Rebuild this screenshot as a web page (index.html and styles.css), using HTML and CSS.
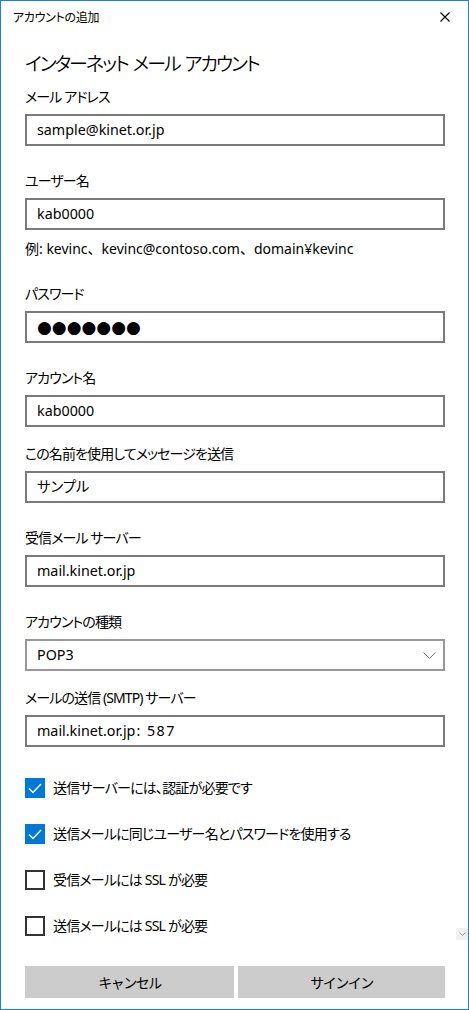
FILE: index.html
```html
<!DOCTYPE html>
<html lang="ja">
<head>
    <meta charset="UTF-8">
    <meta name="viewport" content="width=device-width, initial-scale=1.0">
    <title>アカウントの追加</title>
    <link rel="stylesheet" href="styles.css">
</head>
<body>
    <div class="window">
        <!-- Title bar -->
        <div class="titlebar">
            <span class="title">アカウントの追加</span>
            <svg class="close" width="10" height="10" viewBox="0 0 10 10">
                <path d="M0.5 0.5 L9.5 9.5 M9.5 0.5 L0.5 9.5" stroke="#000" stroke-width="1.1" fill="none"/>
            </svg>
        </div>

        <!-- Form -->
        <div class="content">
            <h1>インターネット メール アカウント</h1>

            <div class="field">
                <label>メール アドレス</label>
                <div class="input">sample@kinet.or.jp</div>
            </div>

            <div class="field">
                <label>ユーザー名</label>
                <div class="input">kab0000</div>
                <p class="hint">例: kevinc、kevinc@contoso.com、domain¥kevinc</p>
            </div>

            <div class="field">
                <label>パスワード</label>
                <div class="input password">●●●●●●●</div>
            </div>

            <div class="field">
                <label>アカウント名</label>
                <div class="input">kab0000</div>
            </div>

            <div class="field tight">
                <label>この名前を使用してメッセージを送信</label>
                <div class="input">サンプル</div>
            </div>

            <div class="field">
                <label>受信メール サーバー</label>
                <div class="input">mail.kinet.or.jp</div>
            </div>

            <div class="field">
                <label>アカウントの種類</label>
                <div class="input select">
                    <span>POP3</span>
                    <svg width="13" height="7" viewBox="0 0 13 7">
                        <path d="M0.5 0.5 L6.5 6.5 L12.5 0.5" stroke="#7a7a7a" stroke-width="1" fill="none"/>
                    </svg>
                </div>
            </div>

            <div class="field tight">
                <label>メールの送信 (SMTP) サーバー</label>
                <div class="input">mail.kinet.or.jp<span class="port">: 587</span></div>
            </div>

            <div class="checks">
                <div class="check">
                    <span class="box checked">
                        <svg width="14" height="11" viewBox="0 0 14 11">
                            <path d="M1 5.5 L5 9.5 L13 1" stroke="#fff" stroke-width="1.4" fill="none"/>
                        </svg>
                    </span>
                    送信サーバーには、認証が必要です
                </div>
                <div class="check">
                    <span class="box checked">
                        <svg width="14" height="11" viewBox="0 0 14 11">
                            <path d="M1 5.5 L5 9.5 L13 1" stroke="#fff" stroke-width="1.4" fill="none"/>
                        </svg>
                    </span>
                    送信メールに同じユーザー名とパスワードを使用する
                </div>
                <div class="check">
                    <span class="box"></span>
                    受信メールには SSL が必要
                </div>
                <div class="check">
                    <span class="box"></span>
                    送信メールには SSL が必要
                </div>
            </div>

            <div class="buttons">
                <button>キャンセル</button>
                <button>サインイン</button>
            </div>
        </div>

        <!-- scroll hint -->
        <div class="scroll-down">
            <svg width="7" height="4" viewBox="0 0 7 4">
                <path d="M0.5 0.5 L3.5 3.5 L6.5 0.5" stroke="#9a9a9a" stroke-width="1" fill="none"/>
            </svg>
        </div>
    </div>
</body>
</html>
```

FILE: styles.css
```css
/* General Reset */
html, body {
    margin: 0;
    padding: 0;
    background: #fff;
    font-family: 'Noto Sans', 'Noto Sans CJK JP', sans-serif;
    font-feature-settings: "palt";
    color: #000;
}

/* Window frame */
.window {
    position: relative;
    width: 469px;
    height: 1010px;
    box-sizing: border-box;
    border: 1px solid #1883d7;
    display: flex;
    flex-direction: column;
}

.titlebar {
    height: 31px;
    display: flex;
    align-items: center;
    justify-content: space-between;
    padding: 0 18px 0 12px;
}

.title {
    font-size: 12px;
    letter-spacing: -0.3px;
}

/* Form area */
.content {
    flex: 1;
    display: flex;
    flex-direction: column;
    padding: 18px 23px 11px 24px;
}

h1 {
    margin: 0 0 9px;
    font-size: 19px;
    line-height: 28px;
    font-weight: 350;
    letter-spacing: -2px;
    word-spacing: 2px;
}

.field {
    margin-top: 25px;
}

h1 + .field {
    margin-top: 0;
}

.field.tight {
    margin-top: 17px;
}

.field label {
    display: block;
    font-size: 14px;
    line-height: 20px;
    letter-spacing: -0.9px;
    margin-bottom: 7px;
}

.input {
    height: 32px;
    box-sizing: border-box;
    border: 2px solid #7a7a7a;
    padding: 0 10px;
    font-size: 14.3px;
    line-height: 28px;
    white-space: nowrap;
}

.password {
    font-family: 'DejaVu Sans', sans-serif;
    font-size: 17px;
    letter-spacing: 0;
}

.port {
    margin-left: 1px;
    letter-spacing: 1.5px;
}

.select {
    display: flex;
    align-items: center;
    justify-content: space-between;
    border-color: #999;
    padding-right: 7px;
}

.hint {
    margin: 9px 0 0;
    font-size: 14px;
    line-height: 20px;
    font-feature-settings: normal;
}

/* Checkboxes */
.checks {
    margin-top: 31px;
    display: flex;
    flex-direction: column;
    gap: 26px;
}

.check {
    display: flex;
    align-items: center;
    gap: 8px;
    font-size: 14px;
    line-height: 20px;
    letter-spacing: -0.8px;
}

.box {
    width: 20px;
    height: 20px;
    box-sizing: border-box;
    border: 2px solid #333;
    display: flex;
    align-items: center;
    justify-content: center;
}

.box.checked {
    background: #0078d7;
    border-color: #0078d7;
}

/* Bottom buttons */
.buttons {
    margin-top: auto;
    display: grid;
    grid-template-columns: 209px 1fr;
    gap: 4px;
}

.buttons button {
    height: 32px;
    border: none;
    background: #ccc;
    font-family: inherit;
    font-size: 14px;
    letter-spacing: -1.5px;
    color: #000;
}

.scroll-down {
    position: absolute;
    right: 0;
    top: 927px;
    width: 12px;
    height: 12px;
    background: #f0f0f0;
    display: flex;
    align-items: center;
    justify-content: center;
}
```
